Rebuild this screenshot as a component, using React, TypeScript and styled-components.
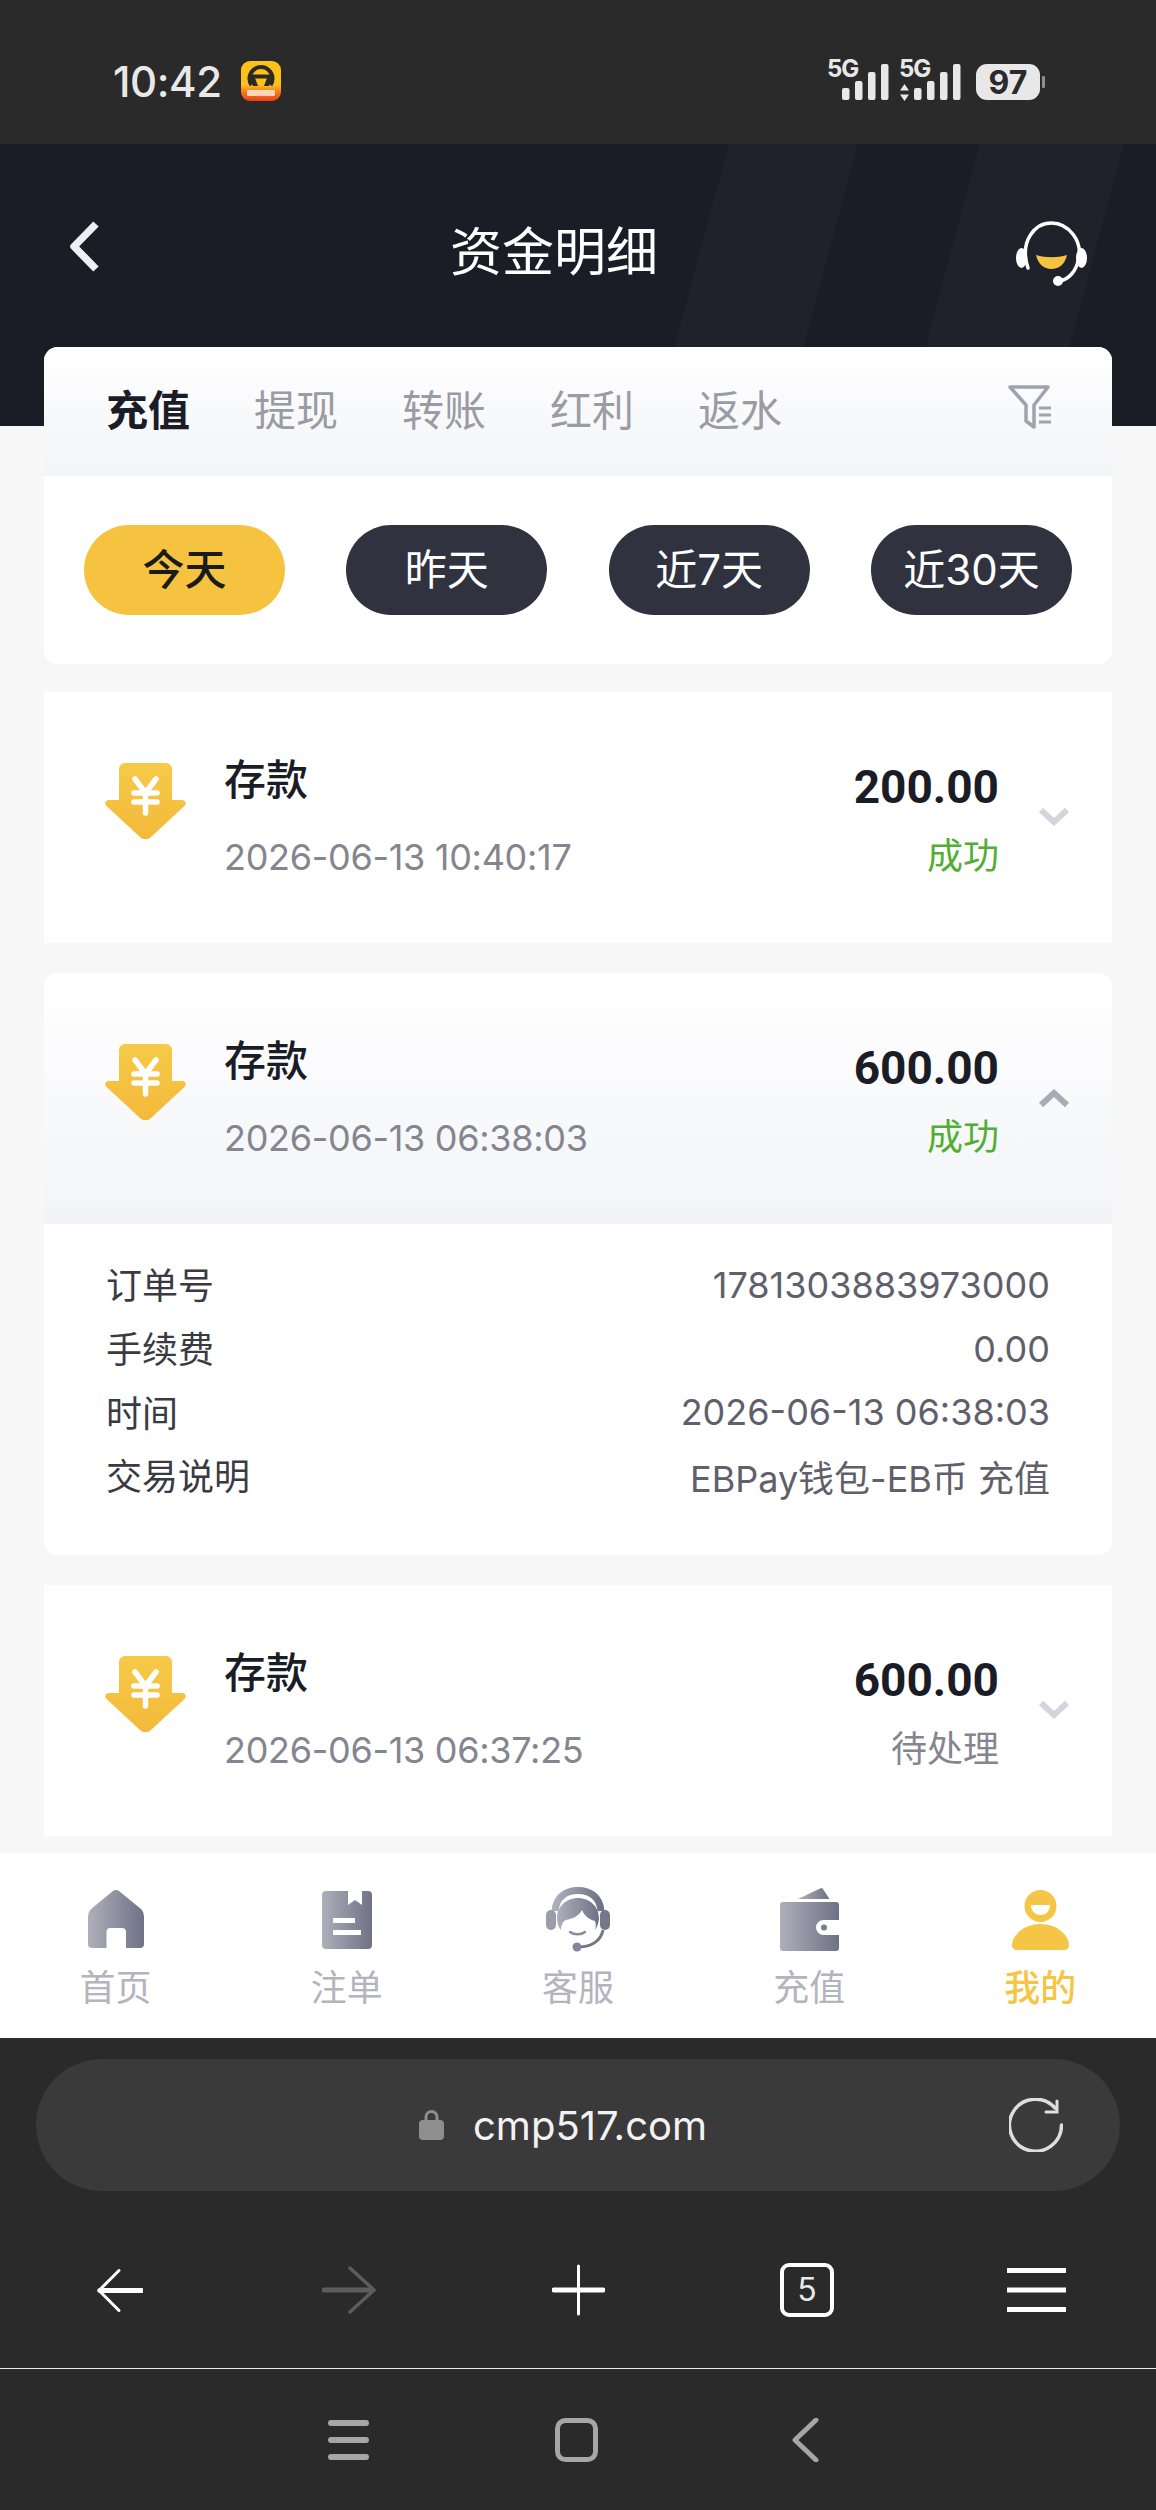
import React from "react";
import styled, { createGlobalStyle } from "styled-components";

const GlobalStyle = createGlobalStyle`
  html, body { margin: 0; padding: 0; background: #f7f7f7; }
  body { font-family: "Noto Sans CJK SC", "Noto Sans", sans-serif; }
  * { box-sizing: border-box; }
`;

const Phone = styled.div`
  width: 1156px;
  height: 2510px;
  display: flex;
  flex-direction: column;
  overflow: hidden;
  background: #f7f7f7;
`;

const StatusBar = styled.div`
  height: 144px;
  flex: none;
  background: #2a2a2a;
  display: flex;
  align-items: center;
  justify-content: space-between;
  padding: 18px 109px 0 113px;
  color: #e8e8e8;
`;

const StatusLeft = styled.div`
  display: flex;
  align-items: center;
  gap: 19px;
`;

const Clock = styled.span`
  font-family: "Inter", sans-serif;
  font-size: 42px;
  font-weight: 500;
  letter-spacing: -0.4px;
`;

const Body = styled.div`
  flex: 1;
  min-height: 0;
  overflow: hidden;
`;

const HeaderBand = styled.div`
  height: 282px;
  background: #1a1d26;
  display: flex;
  align-items: flex-start;
  padding: 69px 69px 0;
  position: relative;
  overflow: hidden;
`;

const Streak = styled.div<{ $left: number; $width: number }>`
  position: absolute;
  top: 0;
  bottom: 0;
  left: ${(p) => p.$left}px;
  width: ${(p) => p.$width}px;
  background: #1f222b;
  transform: skewX(-15deg);
`;

const HeaderIcon = styled.div`
  position: relative;
  display: flex;
  margin-top: 8px;
`;

const Title = styled.h1`
  position: relative;
  flex: 1;
  margin: 0;
  padding-right: 8px;
  text-align: center;
  color: #fff;
  font-size: 52px;
  line-height: 72px;
  font-weight: 400;
`;

const Content = styled.div`
  margin-top: -79px;
  padding: 0 44px;
  display: flex;
  flex-direction: column;
  gap: 30px;
  position: relative;
`;

const FilterCard = styled.div`
  background: #fff;
  border-radius: 14px;
  overflow: hidden;
  margin-bottom: -2px;
`;

const TabRow = styled.div`
  height: 129px;
  background: linear-gradient(#ffffff, #f3f4f8);
  display: flex;
  align-items: center;
  padding: 0 60px 8px 62px;
  gap: 64px;
`;

const Tab = styled.span<{ $active?: boolean }>`
  font-size: 42px;
  line-height: 60px;
  width: 84px;
  white-space: nowrap;
  font-weight: ${(p) => (p.$active ? 700 : 400)};
  color: ${(p) => (p.$active ? "#1a1d26" : "#9a9ba3")};
`;

const FilterIcon = styled.div`
  margin-left: auto;
  display: flex;
  margin-top: -2px;
`;

const PillRow = styled.div`
  height: 188px;
  padding: 49px 40px 0;
  display: flex;
  justify-content: space-between;
`;

const Pill = styled.div<{ $active?: boolean }>`
  width: 201px;
  height: 90px;
  padding-bottom: 7px;
  border-radius: 45px;
  display: flex;
  align-items: center;
  justify-content: center;
  font-family: "Inter", "Noto Sans CJK SC", sans-serif;
  font-size: 42px;
  font-weight: ${(p) => (p.$active ? 500 : 400)};
  background: ${(p) => (p.$active ? "#f5c33f" : "#30333f")};
  color: ${(p) => (p.$active ? "#1a1a1a" : "#fff")};
`;

const Record = styled.div<{ $open?: boolean }>`
  background: #fff;
  border-radius: ${(p) => (p.$open ? "14px" : "0")};
  overflow: hidden;
`;

const RecordHead = styled.div<{ $open?: boolean }>`
  height: 251px;
  display: flex;
  align-items: flex-start;
  padding: 55px 0 0 61px;
  background: ${(p) => (p.$open ? "linear-gradient(#ffffff, #f3f4f8)" : "#fff")};
`;

const ArrowWrap = styled.div`
  width: 81px;
  margin-top: 16px;
  flex: none;
  display: flex;
`;

const RecordInfo = styled.div`
  margin-left: 38px;
  flex: 1;
  display: flex;
  flex-direction: column;
`;

const RecordName = styled.div`
  font-size: 42px;
  line-height: 60px;
  font-weight: 500;
  color: #1a1d26;
`;

const RecordTime = styled.div`
  margin-top: 20px;
  font-family: "Inter", sans-serif;
  font-size: 36px;
  line-height: 60px;
  letter-spacing: -0.3px;
  color: #85858f;
`;

const RecordRight = styled.div`
  display: flex;
  flex-direction: column;
  align-items: flex-end;
  padding-top: 10px;
`;

const Amount = styled.div`
  font-family: "Roboto", sans-serif;
  font-size: 46px;
  line-height: 60px;
  font-weight: 700;
  color: #1a1d26;
`;

const State = styled.div<{ $done?: boolean }>`
  margin-top: 8px;
  font-size: 36px;
  line-height: 56px;
  color: ${(p) => (p.$done ? "#52ae32" : "#85858f")};
`;

const Chevron = styled.div`
  width: 32px;
  margin: 61px 42px 0 39px;
  display: flex;
`;

const Details = styled.div`
  padding: 29px 62px 0;
  height: 331px;
  display: flex;
  flex-direction: column;
`;

const DetailRow = styled.div`
  height: 63.7px;
  display: flex;
  justify-content: space-between;
  align-items: center;
  font-size: 36px;
  color: #3a3b42;
`;

const DetailLabel = styled.span`
  margin-top: -3px;
`;

const DetailValue = styled.span`
  font-family: "Inter", "Noto Sans CJK SC", sans-serif;
  color: #5f606b;
`;

const TabBar = styled.nav`
  height: 185px;
  flex: none;
  background: #fff;
  display: flex;
`;

const TabItem = styled.div<{ $active?: boolean }>`
  width: 231.2px;
  display: flex;
  flex-direction: column;
  align-items: center;
  padding-top: 34px;
  font-size: 36px;
  line-height: 48px;
  gap: 8px;
  font-weight: ${(p) => (p.$active ? 500 : 400)};
  color: ${(p) => (p.$active ? "#f5c546" : "#b3b4bd")};
`;

const BrowserBar = styled.div`
  height: 331px;
  flex: none;
  background: #2a2a2a;
  border-bottom: 1px solid #e8e8e8;
  display: flex;
  flex-direction: column;
  padding-top: 21px;
`;

const UrlField = styled.div`
  height: 132px;
  flex: none;
  margin: 0 36px;
  border-radius: 66px;
  background: #3a3a3a;
  display: flex;
  align-items: center;
  padding: 0 57px 0 383px;
  gap: 29px;
  color: #f2f2f2;
  font-family: "Inter", sans-serif;
  font-size: 40px;
`;

const Reload = styled.div`
  margin-left: auto;
  display: flex;
`;

const BrowserNav = styled.div`
  flex: 1;
  display: grid;
  grid-template-columns: repeat(5, 229px);
  justify-content: center;
  justify-items: center;
  align-items: center;
  padding-top: 21px;
`;

const SystemNav = styled.div`
  height: 141px;
  flex: none;
  background: #2a2a2a;
  display: grid;
  grid-template-columns: repeat(3, 228px);
  justify-content: center;
  justify-items: center;
  align-items: center;
  padding-right: 3px;
`;

const StatusIcons = () => (
  <svg width="220" height="60" viewBox="0 -8 220 60" fill="#e8e8e8">
    <text x="0" y="18" fontFamily="Inter, sans-serif" fontSize="24" fontWeight="700" letterSpacing="-1">5G</text>
    <rect x="15" y="29" width="7.500" height="12" rx="2" />
    <rect x="28" y="22" width="7.500" height="19" rx="2" />
    <rect x="41" y="13" width="7.500" height="28" rx="2" />
    <rect x="54" y="5" width="7.500" height="36" rx="2" />
    <text x="72" y="18" fontFamily="Inter, sans-serif" fontSize="24" fontWeight="700" letterSpacing="-1">5G</text>
    <path d="M77.500 25l4.500 6.500H73zM77.500 42l4.500-6.500H73z" />
    <rect x="87" y="29" width="7.500" height="12" rx="2" />
    <rect x="100" y="22" width="7.500" height="19" rx="2" />
    <rect x="113" y="13" width="7.500" height="28" rx="2" />
    <rect x="126" y="5" width="7.500" height="36" rx="2" />
    <rect x="149" y="5" width="64" height="36" rx="11" />
    <rect x="215" y="17" width="3" height="12" rx="1" fill="#8f8f8f" />
    <text x="181" y="35" textAnchor="middle" fontFamily="Inter, sans-serif" fontSize="32" fontWeight="700" fill="#2a2a2a">97</text>
  </svg>
);

const AppBadge = () => (
  <svg width="40" height="40" viewBox="0 0 40 40">
    <defs>
      <linearGradient id="badge" x1="0" y1="0" x2="0" y2="1">
        <stop offset="0.6" stopColor="#fcc21b" />
        <stop offset="0.72" stopColor="#f98b1e" />
        <stop offset="1" stopColor="#ec3f1a" />
      </linearGradient>
    </defs>
    <rect width="40" height="40" rx="9" fill="url(#badge)" />
    <path d="M10.500 24A11.500 11.500 0 1 1 29.500 24" fill="none" stroke="#2b2a26" strokeWidth="4" />
    <rect x="8" y="13.500" width="24" height="4" fill="#2b2a26" />
    <path d="M8.500 17H14L17 25H12zM31.500 17H26L23 25H28z" fill="#2b2a26" />
    <rect x="6" y="29" width="28" height="6" rx="1" fill="#fff" opacity="0.7" />
  </svg>
);

const BackChevron = () => (
  <svg width="31" height="51" viewBox="0 0 31 51" fill="none">
    <path d="M27 3L5 25.500 27 48" stroke="#eceff3" strokeWidth="7.500" strokeLinejoin="round" />
  </svg>
);

const HeadsetIcon = () => (
  <svg width="71" height="65" viewBox="0 0 71 65" fill="none">
    <path d="M12 47C3 20 19 2 35.500 2S68 20 62 40c-2 10-9 18-18 20" stroke="#fff" strokeWidth="3.500" strokeLinecap="round" />
    <ellipse cx="5.500" cy="37" rx="5.500" ry="10" fill="#fff" />
    <ellipse cx="65.500" cy="37" rx="5.500" ry="10" fill="#fff" />
    <circle cx="42" cy="60" r="5" fill="#fff" />
    <path d="M20 34c10 3 21 3 31 0-2 9-8 14-15.500 14S22 43 20 34z" fill="#f5c33f" />
  </svg>
);

const FilterGlyph = () => (
  <svg width="44" height="44" viewBox="0 0 44 44" fill="none" stroke="#a0a2ad" strokeWidth="3.500">
    <path d="M2 2h38L26 20v22l-8-6V20z" strokeLinejoin="round" />
    <path d="M31 23h12M31 30h12M31 37h12" strokeWidth="3" />
  </svg>
);

const DepositArrow = () => (
  <svg width="81" height="77" viewBox="0 0 81 77">
    <defs>
      <linearGradient id="deposit" x1="0" y1="0" x2="0" y2="1">
        <stop offset="0" stopColor="#f6ca48" />
        <stop offset="1" stopColor="#f4b93b" />
      </linearGradient>
    </defs>
    <path d="M14 6a6 6 0 0 1 6-6h41a6 6 0 0 1 6 6v31h10c3.500 0 5 3.500 2.500 6L46 74c-3 3-8 3-11 0L1.500 43C-1 40.500.5 37 4 37h10z" fill="url(#deposit)" />
    <path d="M30 16l10.500 14L51 16M40.500 30v20M29 30h23M29 39h23" fill="none" stroke="#fff" strokeWidth="5.500" strokeLinecap="round" />
  </svg>
);

const ChevronGlyph = ({ up }: { up?: boolean }) => (
  <svg width="32" height="18" viewBox="0 0 32 18" fill="none">
    <path d={up ? "M3 16L16 4l13 12" : "M3 2l13 12L29 2"} stroke={up ? "#a9abb6" : "#d3d5de"} strokeWidth="6" />
  </svg>
);

const IconGradient = ({ id }: { id: string }) => (
  <defs>
    <linearGradient id={id} x1="0" y1="0" x2="1" y2="0">
      <stop offset="0" stopColor="#aeafba" />
      <stop offset="1" stopColor="#6f7286" />
    </linearGradient>
  </defs>
);

const HomeIcon = () => (
  <svg width="56" height="66" viewBox="0 -3 56 66">
    <IconGradient id="home" />
    <path d="M25 1Q28-1 31 1L53 19Q56 22 56 26V54Q56 58 52 58H38V42Q38 38 34 38H22Q18.500 38 18.500 42V58H4Q0 58 0 54V26Q0 22 3 19Z" fill="url(#home)" />
  </svg>
);

const BookIcon = () => (
  <svg width="50" height="66" viewBox="0 -4 50 66">
    <IconGradient id="book" />
    <path d="M4 0H26V14L33 9L40 14V0H46a4 4 0 0 1 4 4V54a4 4 0 0 1-4 4H4a4 4 0 0 1-4-4V4a4 4 0 0 1 4-4Z" fill="url(#book)" />
    <rect x="11" y="27" width="22" height="5" fill="#fff" />
    <rect x="11" y="39" width="28" height="5" fill="#fff" />
  </svg>
);

const AgentIcon = () => (
  <svg width="64" height="66" viewBox="0 0 64 66" fill="none">
    <IconGradient id="agent" />
    <path d="M9 24C10 10 20 3.500 32 3.500S54 10 55 24" stroke="url(#agent)" strokeWidth="7" />
    <rect x="0" y="23" width="10" height="20" rx="5" fill="#9b9caa" />
    <rect x="54" y="23" width="10" height="20" rx="5" fill="#74768a" />
    <path d="M32 11C20 11 11 20 11 31c0 5 1 9 4 12 0-5 2-9 5-10 6-1 13-4 16-10 2 5 6 9 13 11 1 3 1 6 0 9 2-3 4-7 4-12 0-11-9-20-21-20z" fill="url(#agent)" />
    <path d="M24 45c4 3 11 3 15 0" stroke="#8a8b9b" strokeWidth="2.500" strokeLinecap="round" />
    <path d="M57 43c-2 11-12 17-24 17" stroke="#74768a" strokeWidth="3" />
    <circle cx="31" cy="60" r="4.500" fill="#85879a" />
  </svg>
);

const WalletIcon = () => (
  <svg width="59" height="66" viewBox="0 -1 59 66">
    <IconGradient id="wallet" />
    <path d="M18 11L40 .5Q42-.5 43 1L49.500 11z" fill="url(#wallet)" />
    <path d="M3 14H56a3 3 0 0 1 3 3V32H43.500a7.500 7.500 0 0 0 0 15H59V60a3 3 0 0 1-3 3H3a3 3 0 0 1-3-3V17a3 3 0 0 1 3-3z" fill="url(#wallet)" />
    <circle cx="44" cy="39.500" r="3" fill="#7a7c8f" />
  </svg>
);

const UserIcon = () => (
  <svg width="57" height="66" viewBox="0 -3 57 66" fill="#f5c546">
    <path d="M28.500 0a16 16 0 1 1 0 32 16 16 0 0 1 0-32zM19 15c0 6 4 10 9.500 10S38 21 38 15z" fillRule="evenodd" />
    <path d="M28.500 34C46 34 57 46 57 55c0 3-2 5-5 5H5c-3 0-5-2-5-5C0 46 11 34 28.500 34z" />
  </svg>
);

const LockIcon = () => (
  <svg width="25" height="30" viewBox="0 0 25 30" fill="#8e8e8e">
    <path d="M7 13V7a5.500 5.500 0 0 1 11 0v6" fill="none" stroke="#8e8e8e" strokeWidth="3" />
    <rect y="10" width="25" height="20" rx="4" />
  </svg>
);

const ReloadIcon = () => (
  <svg width="54" height="54" viewBox="0 0 54 54" fill="none" stroke="#dedede" strokeWidth="3.500" strokeLinecap="round">
    <path d="M46 10A26 26 0 1 0 52.500 27" />
    <path d="M48 3v11H37" strokeWidth="3" />
  </svg>
);

const NavBackIcon = () => (
  <svg width="46" height="43" viewBox="0 0 46 43" fill="none" stroke="#fff" strokeLinecap="round">
    <path d="M22 1.500L2 21.500l20 20" strokeWidth="3" />
    <path d="M3 21.500h42" strokeWidth="5" />
  </svg>
);

const NavForwardIcon = () => (
  <svg width="54" height="48" viewBox="0 0 54 48" fill="none" stroke="#5c5c5c" strokeLinecap="round">
    <path d="M28 2l24 22-24 22" strokeWidth="3.500" />
    <path d="M2 24h48" strokeWidth="5" />
  </svg>
);

const PlusIcon = () => (
  <svg width="53" height="52" viewBox="0 0 53 52" stroke="#fff" strokeLinecap="round">
    <path d="M26.500 2v48" strokeWidth="3" />
    <path d="M2 26h49" strokeWidth="5" />
  </svg>
);

const TabsIcon = () => (
  <svg width="54" height="54" viewBox="0 0 54 54" fill="none">
    <rect x="2" y="2" width="50" height="50" rx="7" stroke="#fff" strokeWidth="4" />
    <text x="27" y="38" textAnchor="middle" fill="#e8e8e8" fontFamily="Inter, sans-serif" fontSize="32">5</text>
  </svg>
);

const MenuIcon = () => (
  <svg width="59" height="44" viewBox="0 0 59 44" fill="#fff">
    <rect y="0" width="59" height="5" />
    <rect y="19.500" width="59" height="5" />
    <rect y="39" width="59" height="5" />
  </svg>
);

const SysMenu = () => (
  <svg width="41" height="40" viewBox="0 0 41 40" fill="#a6a6a6">
    <rect y="0" width="41" height="6" rx="3" />
    <rect y="17" width="41" height="6" rx="3" />
    <rect y="34" width="41" height="6" rx="3" />
  </svg>
);

const SysHome = () => (
  <svg width="43" height="44" viewBox="0 0 43 44" fill="none">
    <rect x="2.500" y="2.500" width="38" height="39" rx="8" stroke="#a6a6a6" strokeWidth="5" />
  </svg>
);

const SysBack = () => (
  <svg width="28" height="44" viewBox="0 0 28 44" fill="none">
    <path d="M25 2L4 22l21 20" stroke="#a6a6a6" strokeWidth="5" strokeLinejoin="round" strokeLinecap="round" />
  </svg>
);

const tabs = ["充值", "提现", "转账", "红利", "返水"];
const ranges = ["今天", "昨天", "近7天", "近30天"];

const detailRows = [
  ["订单号", "1781303883973000"],
  ["手续费", "0.00"],
  ["时间", "2026-06-13 06:38:03"],
  ["交易说明", "EBPay钱包-EB币 充值"],
];

const bottomTabs = [
  { label: "首页", icon: <HomeIcon /> },
  { label: "注单", icon: <BookIcon /> },
  { label: "客服", icon: <AgentIcon /> },
  { label: "充值", icon: <WalletIcon /> },
  { label: "我的", icon: <UserIcon />, active: true },
];

function RecordHeader(props: { amount: string; time: string; state: string; done?: boolean; open?: boolean }) {
  return (
    <RecordHead $open={props.open}>
      <ArrowWrap><DepositArrow /></ArrowWrap>
      <RecordInfo>
        <RecordName>存款</RecordName>
        <RecordTime>{props.time}</RecordTime>
      </RecordInfo>
      <RecordRight>
        <Amount>{props.amount}</Amount>
        <State $done={props.done}>{props.state}</State>
      </RecordRight>
      <Chevron><ChevronGlyph up={props.open} /></Chevron>
    </RecordHead>
  );
}

export default function App() {
  return (
    <Phone>
      <GlobalStyle />
      <StatusBar>
        <StatusLeft>
          <Clock>10:42</Clock>
          <AppBadge />
        </StatusLeft>
        <StatusIcons />
      </StatusBar>
      <Body>
        <HeaderBand>
          <Streak $left={691} $width={129} />
          <Streak $left={942} $width={144} />
          <HeaderIcon><BackChevron /></HeaderIcon>
          <Title>资金明细</Title>
          <HeaderIcon><HeadsetIcon /></HeaderIcon>
        </HeaderBand>
        <Content>
          <FilterCard>
            <TabRow>
              {tabs.map((t, i) => (
                <Tab key={t} $active={i === 0}>{t}</Tab>
              ))}
              <FilterIcon><FilterGlyph /></FilterIcon>
            </TabRow>
            <PillRow>
              {ranges.map((r, i) => (
                <Pill key={r} $active={i === 0}>{r}</Pill>
              ))}
            </PillRow>
          </FilterCard>
          <Record>
            <RecordHeader amount="200.00" time="2026-06-13 10:40:17" state="成功" done />
          </Record>
          <Record $open>
            <RecordHeader amount="600.00" time="2026-06-13 06:38:03" state="成功" done open />
            <Details>
              {detailRows.map(([k, v]) => (
                <DetailRow key={k}>
                  <DetailLabel>{k}</DetailLabel>
                  <DetailValue>{v}</DetailValue>
                </DetailRow>
              ))}
            </Details>
          </Record>
          <Record>
            <RecordHeader amount="600.00" time="2026-06-13 06:37:25" state="待处理" />
          </Record>
        </Content>
      </Body>
      <TabBar>
        {bottomTabs.map((t) => (
          <TabItem key={t.label} $active={t.active}>
            {t.icon}
            <span>{t.label}</span>
          </TabItem>
        ))}
      </TabBar>
      <BrowserBar>
        <UrlField>
          <LockIcon />
          <span>cmp517.com</span>
          <Reload><ReloadIcon /></Reload>
        </UrlField>
        <BrowserNav>
          <NavBackIcon />
          <NavForwardIcon />
          <PlusIcon />
          <TabsIcon />
          <MenuIcon />
        </BrowserNav>
      </BrowserBar>
      <SystemNav>
        <SysMenu />
        <SysHome />
        <SysBack />
      </SystemNav>
    </Phone>
  );
}
